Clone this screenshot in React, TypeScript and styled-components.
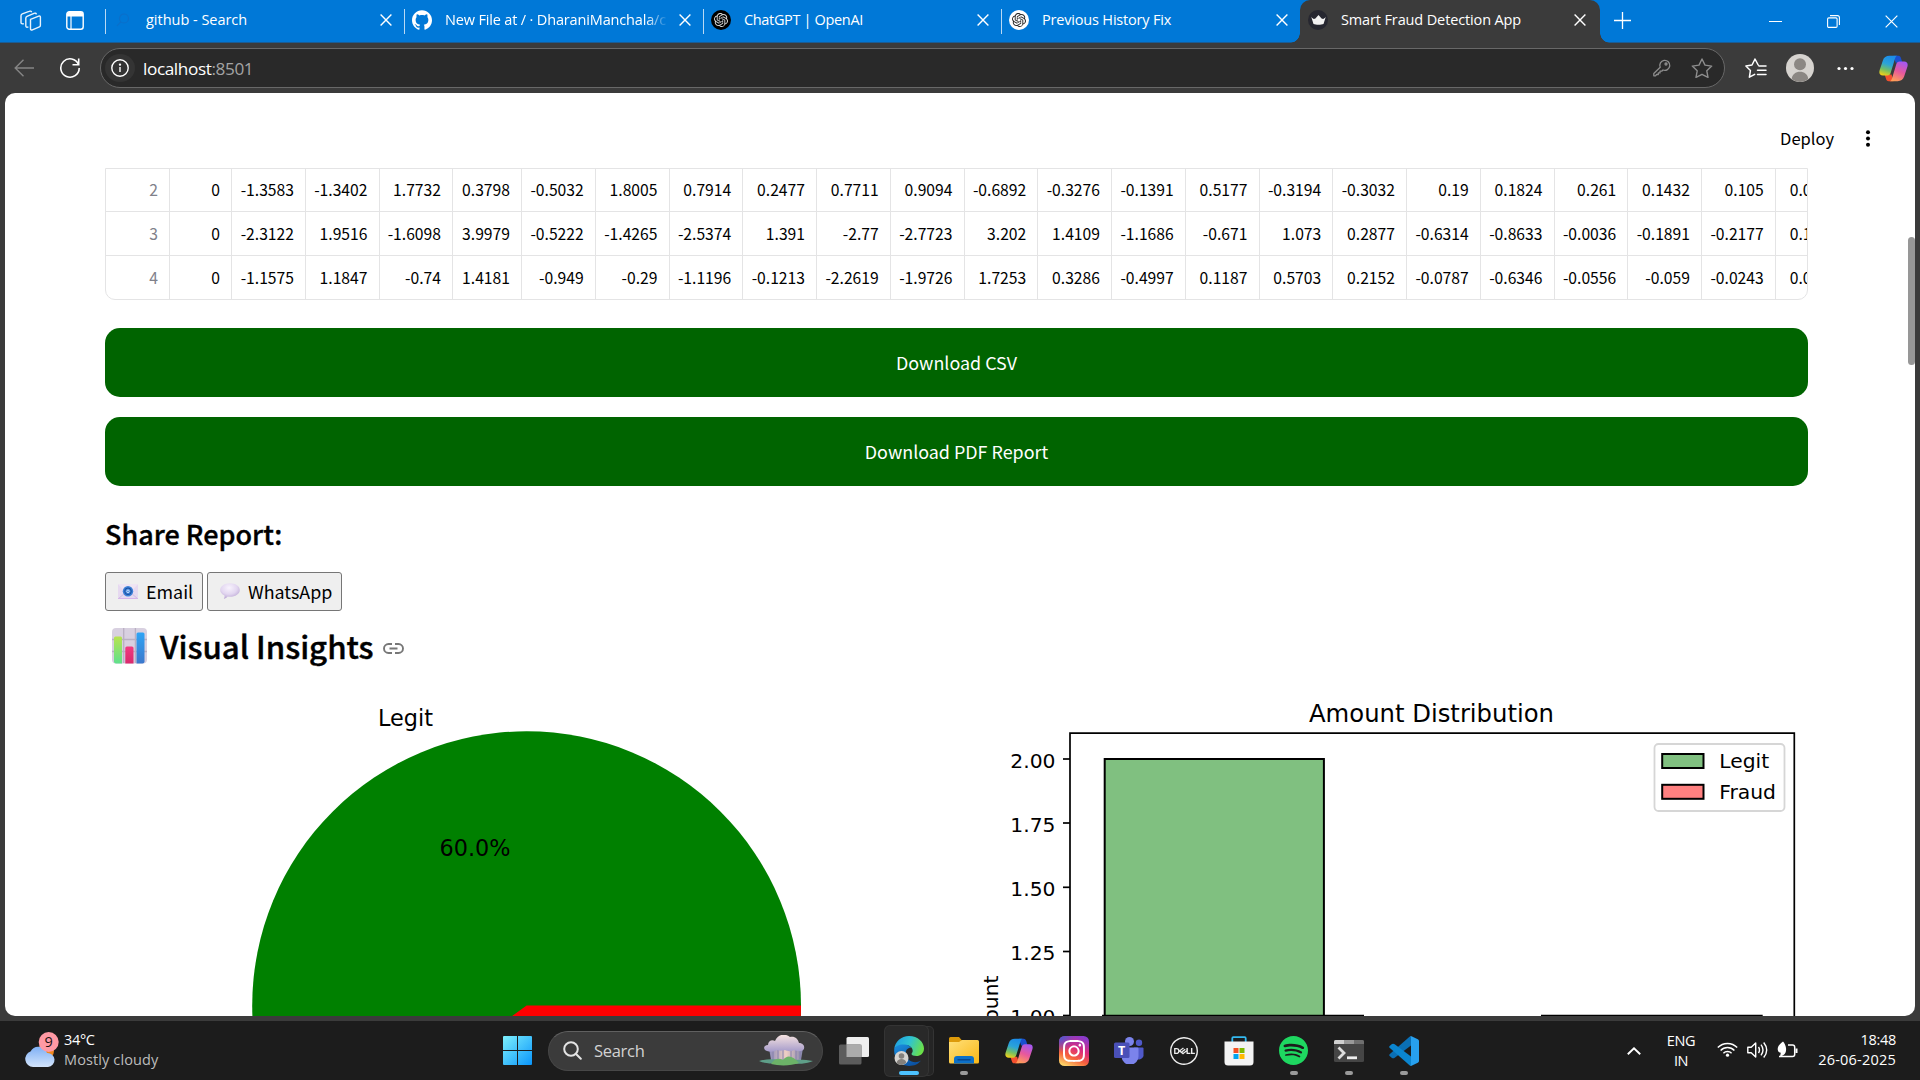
import React from "react";
import styled, { createGlobalStyle } from "styled-components";
import { SiDell, SiGithub, SiOpenai, SiSpotify } from "react-icons/si";
import { FaInstagram } from "react-icons/fa";

const segoe = `"Open Sans", "Noto Sans", sans-serif`;
const source = `"Noto Sans CJK JP", "Noto Sans CJK SC", sans-serif`;

const GlobalStyle = createGlobalStyle`
  * { box-sizing: border-box; }
  html, body { margin: 0; padding: 0; background: #3b3b3b; overflow: hidden; }
  button { font: inherit; color: inherit; padding: 0; margin: 0; border: 0; background: none; }
  svg { display: block; flex: none; }
`;

const Screen = styled.div`
  width: 1920px;
  height: 1080px;
  display: flex;
  flex-direction: column;
  background: #3b3b3b;
  overflow: hidden;
  font-family: ${segoe};
`;

/* ---------- Tab strip ---------- */

const TabStrip = styled.header`
  height: 43px;
  flex: none;
  display: flex;
  background: #0078d7;
  box-shadow: inset 0 -1px 0 #1a5c94;
  color: #fff;
`;

const StripTools = styled.div`
  width: 105px;
  display: flex;
  align-items: center;
  padding: 0 0 3px 20px;
  gap: 24px;
`;

const TabBox = styled.div<{ $active?: boolean; $w: number }>`
  width: ${(p) => p.$w}px;
  flex: none;
  height: 43px;
  display: flex;
  align-items: center;
  padding: 0 ${(p) => (p.$active ? 14 : 12.5)}px 3px 8px;
  background: ${(p) => (p.$active ? "#3b3b3b" : "transparent")};
  border-radius: ${(p) => (p.$active ? "10px 10px 0 0" : "0")};
  position: relative;
  ${(p) =>
    p.$active
      ? `
    &::before, &::after {
      content: "";
      position: absolute;
      bottom: 0;
      width: 10px;
      height: 10px;
    }
    &::before { left: -10px; background: radial-gradient(circle at 0 0, transparent 9.5px, #3b3b3b 10px); }
    &::after { right: -10px; background: radial-gradient(circle at 100% 0, transparent 9.5px, #3b3b3b 10px); }
  `
      : `
    &::before {
      content: "";
      position: absolute;
      left: 0;
      top: 9px;
      width: 1px;
      height: 25px;
      background: #b9d9f4;
    }
  `}
`;

const Favicon = styled.span<{ $bg?: string; $fg?: string }>`
  width: 20px;
  height: 20px;
  border-radius: 50%;
  display: flex;
  align-items: center;
  justify-content: center;
  background: ${(p) => p.$bg || "transparent"};
  color: ${(p) => p.$fg || "#fff"};
  flex: none;
`;

const TabTitle = styled.span<{ $fade?: boolean; $track: number }>`
  flex: 1;
  margin: 0 ${(p) => (p.$fade ? 11 : 12)}px 0 13px;
  font-size: 14.5px;
  line-height: 20px;
  letter-spacing: ${(p) => p.$track}px;
  white-space: nowrap;
  overflow: hidden;
  ${(p) => p.$fade && "mask-image: linear-gradient(90deg, #000 90%, transparent 100%);"}
`;

const WindowTools = styled.div`
  flex: 1;
  display: flex;
  align-items: center;
  padding: 0 22px 0 14px;
  gap: 45px;
  svg:first-child { margin-right: auto; margin-bottom: 3px; }
`;

/* ---------- Toolbar ---------- */

const Toolbar = styled.nav`
  height: 50px;
  flex: none;
  display: flex;
  align-items: center;
  padding: 0 12px 0 14px;
`;

const BackSlot = styled.span`margin-right: 25px;`;

const AddressBar = styled.div`
  width: 1625px;
  height: 40px;
  margin-left: 19px;
  border: 1px solid #686868;
  border-radius: 20px;
  background: #292929;
  display: flex;
  align-items: center;
  padding: 0 11px 0 4px;
`;

const InfoDisc = styled.span`
  width: 30px;
  height: 28px;
  border-radius: 50%;
  background: #343434;
  display: flex;
  align-items: center;
  justify-content: center;
`;

const Url = styled.span`
  flex: 1;
  margin-left: 8px;
  color: #fff;
  font-size: 17.2px;
  letter-spacing: -0.4px;
  em { font-style: normal; color: #a3a3a3; }
`;

const BarIcons = styled.span`
  display: flex;
  gap: 20px;
`;

const ToolIcons = styled.div`
  display: grid;
  grid-template-columns: 41px 51px 42px 29px;
  align-items: center;
  margin-left: 20px;
`;

/* ---------- Page ---------- */

const Page = styled.main`
  width: 1910px;
  height: 923px;
  flex: none;
  margin-left: 5px;
  border-radius: 10px;
  background: #fff;
  overflow: hidden;
  position: relative;
  padding: 0 107px 0 100px;
  font-family: ${source};
  color: #000;
`;

const ScrollThumb = styled.div`
  position: absolute;
  right: 0;
  top: 144px;
  width: 7px;
  height: 128px;
  border-radius: 4px;
  background: #979797;
`;

const AppHeader = styled.div`
  height: 75px;
  margin-right: -65px;
  display: flex;
  align-items: center;
  justify-content: flex-end;
  gap: 30px;
  padding: 16px 1px 0 0;
  font-size: 16.5px;
  line-height: 30px;
  span { margin-top: -1px; }
`;

const Table = styled.div`
  height: 132px;
  border: 1px solid #e4e4e5;
  border-radius: 0 0 10px 10px;
  overflow: hidden;
`;

const Row = styled.div`
  height: 44px;
  line-height: 43px;
  display: grid;
  grid-template-columns: 64px 62px 74px 73.5px 73.5px 69px repeat(18, 73.75px);
  &:first-child { height: 42px; line-height: 41px; }
  & + & { border-top: 1px solid #e4e4e5; }
`;

const Cell = styled.div<{ $index?: boolean; $cut?: boolean }>`
  border-right: 1px solid #e4e4e5;
  padding: 0 ${(p) => (p.$cut ? 0 : 11)}px 0 ${(p) => (p.$cut ? 14 : 0)}px;
  text-align: ${(p) => (p.$cut ? "left" : "right")};
  font-size: 15.7px;
  white-space: nowrap;
  color: ${(p) => (p.$index ? "#80818a" : "#000")};
`;

const DownloadList = styled.div`
  margin-top: 28px;
  display: flex;
  flex-direction: column;
  gap: 20px;
`;

const DownloadButton = styled.button`
  height: 69px;
  border-radius: 15px;
  background: #006400;
  color: #fff;
  font-size: 17.9px;
  line-height: 26px;
  padding-bottom: 1px;
`;

const ShareHeading = styled.h4`
  margin: 31px 0 0;
  height: 35px;
  font-size: 27px;
  line-height: 34px;
  font-weight: 500;
  -webkit-text-stroke: 0.35px #000;
`;

const ShareRow = styled.div`
  display: flex;
  gap: 4px;
  margin-top: 20px;
`;

const ShareButton = styled.button<{ $w: number }>`
  width: ${(p) => p.$w}px;
  height: 39px;
  border: 1px solid #767676;
  border-radius: 3px;
  background: #efefef;
  display: flex;
  align-items: center;
  gap: 8px;
  padding: 0 0 1px 12px;
  font-size: 17.9px;
  line-height: 26px;
`;

const InsightsHeading = styled.h3`
  margin: 10px 0 0 7px;
  height: 50px;
  display: flex;
  align-items: center;
  font-size: 31.2px;
  line-height: 50px;
  font-weight: 500;
  span { margin: 0 10px 0 13px; -webkit-text-stroke: 0.45px #000; }
  svg:last-child { margin-top: 4px; }
`;

const Charts = styled.div`
  display: flex;
  justify-content: space-between;
  margin-top: 19px;
  text { font-family: "DejaVu Sans", sans-serif; fill: #000; }
`;

/* ---------- Taskbar ---------- */

const Taskbar = styled.footer`
  height: 59px;
  margin-top: 5px;
  flex: none;
  background: #1c1c1c;
  display: flex;
  align-items: center;
  color: #fff;
`;

const Weather = styled.div`
  width: 503px;
  display: flex;
  align-items: center;
  padding-left: 24px;
  padding-bottom: 2px;
  gap: 5px;
`;

const Lines = styled.div<{ $align?: string; $track?: number }>`
  font-size: 14.5px;
  line-height: 20px;
  letter-spacing: ${(p) => p.$track ?? -0.2}px;
  text-align: ${(p) => p.$align || "left"};
  white-space: nowrap;
`;

const Condition = styled.span`
  color: #bdbdbd;
  letter-spacing: 0.12px;
`;

const DateText = styled.span`letter-spacing: 0.22px;`;

const SearchBox = styled.div`
  width: 275px;
  height: 40px;
  margin: 0 3px 0 16px;
  border-radius: 20px;
  border: 1px solid #474747;
  border-top-color: #606060;
  background: #3b3b3b;
  display: flex;
  align-items: center;
  padding: 0 9px 0 14px;
  color: #d2d2d2;
  font-size: 16.5px;
  letter-spacing: -0.3px;
  span { flex: 1; margin-left: 12px; }
`;

const AppSlot = styled.div<{ $on?: boolean; $run?: boolean }>`
  width: 47px;
  height: 50px;
  margin: 0 4px;
  border-radius: 5px;
  display: flex;
  flex-direction: column;
  align-items: center;
  justify-content: center;
  position: relative;
  ${(p) => p.$on && "width: 43px; margin: 0 8px 0 4px; padding-left: 4px; background: #292929; box-shadow: 0 0 0 1px #343434, 6px 0 0 -1px #252525, 6px 0 0 0 #343434;"}
  &::after {
    content: "";
    position: absolute;
    bottom: 1px;
    width: ${(p) => (p.$on ? 20 : 8)}px;
    height: 4px;
    border-radius: 2px;
    background: ${(p) => (p.$on ? "#4cc2ff" : p.$run ? "#9a9a9a" : "transparent")};
  }
`;

const Tray = styled.div`
  margin-left: auto;
  padding-right: 24px;
  display: flex;
  align-items: center;
`;

const Language = styled.div`margin: 0 22px 0 26px;`;

const Clock = styled.div`padding-bottom: 2px;`;

const TrayIcons = styled.div`
  display: flex;
  gap: 9px;
  margin-right: 20px;
  padding-bottom: 1px;
`;

/* ---------- Icons ---------- */

const CloseIcon = ({ size = 12, w = 1.4 }: { size?: number; w?: number }) => (
  <svg width={size} height={size} viewBox="0 0 12 12" stroke="#fff" strokeWidth={w} fill="none">
    <path d="M.6.6l10.8 10.8M11.4.6L.6 11.4" />
  </svg>
);

const WorkspacesIcon = () => (
  <svg width="22" height="21" viewBox="0 0 22 21" fill="none" stroke="#e8f3fc" strokeWidth="1.4" strokeLinejoin="round">
    <path d="M10.5 9.3l8.2-3.2c1-.3 1.7.1 1.7 1v8.2c0 .8-.3 1.3-1 1.6l-7 3c-1 .4-1.9 0-1.9-1z" />
    <path d="M8.4 16.8c-1.6.8-2.6.3-2.6-1V8.2c0-1 .4-1.5 1.2-1.9l7-3c1.2-.5 2.200 0 2.400 1" />
    <path d="M3.900 13.600C2.300 14.200 1 13.600 1 12.400V5.800c0-1 .5-1.600 1.300-1.900l6.800-2.600c1.200-.5 2.200-.1 2.500.9" />
  </svg>
);

const VerticalTabsIcon = () => (
  <svg width="18" height="19" viewBox="0 0 18 19" fill="none">
    <rect x=".8" y=".8" width="16.400" height="17.400" rx="2.500" stroke="#fff" strokeWidth="1.400" />
    <path d="M1 5.500V3a2 2 0 012-2h12a2 2 0 012 2v2.500z" fill="#fff" />
    <path d="M5 5v13" stroke="#fff" strokeWidth="1.200" />
  </svg>
);

const FaintSearch = () => (
  <svg width="14" height="14" viewBox="0 0 14 14" fill="none" stroke="#0a6fca" strokeWidth="1.200">
    <circle cx="8" cy="5.500" r="4.500" />
    <path d="M4.800 8.800L1 12.800" />
  </svg>
);

const Crown = () => (
  <svg width="15" height="10" viewBox="0 0 15 10" fill="#f2f2f2">
    <path d="M.2 1.800c1.500 2 2.600 2.600 4.200 1.600L7.500 0l3.100 3.400c1.600 1 2.700.4 4.200-1.600L12.500 9c-2.500.9-7.500.9-10 0z" />
  </svg>
);

const Copilot = ({ id, size }: { id: string; size: number }) => (
  <svg width={size} height={size} viewBox="0 0 24 24">
    <defs>
      <linearGradient id={id + "a"} x1="0.5" y1="0" x2="0.200" y2="1">
        <stop offset="0" stopColor="#1c8de8" />
        <stop offset=".4" stopColor="#2ba4d8" />
        <stop offset=".7" stopColor="#73bf63" />
        <stop offset="1" stopColor="#f5d116" />
      </linearGradient>
      <linearGradient id={id + "b"} x1="0.700" y1="0" x2="0.300" y2="1">
        <stop offset="0" stopColor="#a658f0" />
        <stop offset=".5" stopColor="#e8589c" />
        <stop offset="1" stopColor="#ff9f58" />
      </linearGradient>
    </defs>
    <path d="M12 1.500h4c1.300 0 1.900.9 2.200 2l1.200 3.700h-5.600z" fill="#1a4fcf" />
    <path d="M12 22.500H8c-1.300 0-1.900-.9-2.200-2l-1.200-3.500h5.800z" fill="#f4502e" />
    <path d="M8.500 1.500h6.800c-1.300.2-1.700 1.200-2.100 2.500L9.700 15.500c-.4 1.400-1.300 2.200-2.700 2.200H3.200C.7 17.700-.2 16 .5 13.500L3.200 5.300C4 2.800 6 1.500 8.500 1.500z" fill={`url(#${id}a)`} />
    <path d="M15.500 22.500H8.700c1.300-.2 1.700-1.200 2.100-2.500l3.500-11.500c.4-1.400 1.300-2.200 2.700-2.200h3.800c2.500 0 3.400 1.700 2.700 4.200l-2.700 8.200c-.8 2.500-2.800 3.800-5.300 3.800z" fill={`url(#${id}b)`} />
  </svg>
);

const BarEmoji = () => (
  <svg width="35" height="36" viewBox="0 0 35 36">
    <defs>
      <linearGradient id="g1" x1="0" y1="0" x2="0" y2="1"><stop offset="0" stopColor="#b8e34f" /><stop offset="1" stopColor="#5fe08d" /></linearGradient>
      <linearGradient id="g2" x1="0" y1="0" x2="0" y2="1"><stop offset="0" stopColor="#f23a80" /><stop offset="1" stopColor="#d92a6c" /></linearGradient>
      <linearGradient id="g3" x1="0" y1="0" x2="0" y2="1"><stop offset="0" stopColor="#2ea4f5" /><stop offset="1" stopColor="#3c78cc" /></linearGradient>
    </defs>
    <rect x="0" y="0" width="35" height="35.500" rx="4" fill="#d8d0e0" />
    <path d="M11.700 0v35M23.400 0v35M0 11.500h35M0 23.500h35" stroke="#b9b0c2" strokeWidth="1.300" />
    <path d="M2 10a1.500 1.500 0 011.500-1.500h5A1.500 1.500 0 0110 10v25.500H4q-2 0-2-2z" fill="url(#g1)" />
    <path d="M13.300 20a1.500 1.500 0 011.500-1.500h5.200a1.500 1.500 0 011.500 1.500v15.500h-8.200z" fill="url(#g2)" />
    <path d="M24.500 6A1.500 1.500 0 0126 4.500h5A1.500 1.500 0 0132.500 6v27.500q0 2-2 2h-6z" fill="url(#g3)" />
  </svg>
);

const EmailEmoji = () => (
  <svg width="20" height="15" viewBox="0 0 20 15">
    <rect width="20" height="15" rx="1" fill="#e6d9f0" />
    <path d="M0 0h20l-7 8H7z" fill="#efe5f3" />
    <path d="M0 15l7-6M20 15l-7-6" stroke="#cdbce0" />
    <path d="M0 14h20v1H0z" fill="#d6b4ea" />
    <circle cx="10" cy="7.300" r="5.200" fill="#3c80d8" />
    <circle cx="10" cy="7.300" r="3.300" fill="none" stroke="#1c4f9c" strokeWidth="1" />
    <circle cx="10" cy="7.300" r="1.300" fill="none" stroke="#d6e6fa" strokeWidth=".9" />
  </svg>
);

const SpeechEmoji = () => (
  <svg width="20" height="16" viewBox="0 0 20 16">
    <defs>
      <radialGradient id="sp" cx=".45" cy=".3" r=".75"><stop offset="0" stopColor="#f8f3fd" /><stop offset=".55" stopColor="#e2d6f0" /><stop offset="1" stopColor="#b5a0d0" /></radialGradient>
    </defs>
    <path d="M10 .2c5.500 0 9.800 2.900 9.800 6.800S15.500 13.800 10 13.800c-.8 0-1.600-.1-2.300-.2C6.500 15 5.200 15.800 3.800 15.700c.7-.8.9-2 .7-3.200C1.800 11.200.2 9.300.2 7 .2 3.100 4.500.2 10 .2z" fill="url(#sp)" />
  </svg>
);

const PieChart = () => (
  <svg width="835" height="330" viewBox="105 690 835 330">
    <text x="378" y="725.500" fontSize="22.200" textLength="55" lengthAdjust="spacingAndGlyphs">Legit</text>
    <circle cx="526.600" cy="1005.700" r="274.400" fill="#008000" />
    <path d="M526.600 1005.500H801A274.400 274.400 0 01304.600 1167z" fill="#f00" />
    <text x="475" y="856" fontSize="22.200" textAnchor="middle" textLength="71" lengthAdjust="spacingAndGlyphs">60.0%</text>
  </svg>
);

const ticks = [
  { label: "2.00", y: 759 },
  { label: "1.75", y: 823 },
  { label: "1.50", y: 887.300 },
  { label: "1.25", y: 951.500 },
  { label: "1.00", y: 1015.500 },
];

const BarChart = () => (
  <svg width="838" height="330" viewBox="970 690 838 330">
    <text x="1309" y="721.500" fontSize="24.300" textLength="245" lengthAdjust="spacingAndGlyphs">Amount Distribution</text>
    <rect x="1104.700" y="759" width="219.200" height="300" fill="#80c080" stroke="#000" strokeWidth="2" />
    <path d="M1070 1060V733.200H1794.300V1060" fill="none" stroke="#000" strokeWidth="1.700" />
    <path d="M1102 1015.500H1364M1541 1015.500H1762.700" stroke="#000" strokeWidth="1.600" />
    {ticks.map((t) => (
      <g key={t.label}>
        <path d={`M1063 ${t.y}h7`} stroke="#000" strokeWidth="1.700" />
        <text x="1055.500" y={t.y + 8.800} fontSize="20.300" textAnchor="end">{t.label}</text>
      </g>
    ))}
    <text transform="translate(998.300 975.500) rotate(-90)" fontSize="20.300" textAnchor="end">Count</text>
    <rect x="1654.500" y="744" width="130" height="67" rx="4" fill="#fff" stroke="#d6d6d6" strokeWidth="1.800" />
    <rect x="1662.200" y="754" width="41.300" height="14" fill="#80c080" stroke="#000" strokeWidth="2" />
    <rect x="1662.200" y="784.800" width="41.300" height="14" fill="#ff8080" stroke="#000" strokeWidth="2" />
    <text x="1719.300" y="768.300" fontSize="20.300">Legit</text>
    <text x="1719.300" y="799" fontSize="20.300">Fraud</text>
  </svg>
);

const WeatherIcon = () => (
  <svg width="35" height="38" viewBox="24 1027 35 38">
    <defs>
      <linearGradient id="cl" x1="0" y1="0" x2="0" y2="1"><stop offset="0" stopColor="#7fb0f5" /><stop offset="1" stopColor="#d3e4fb" /></linearGradient>
    </defs>
    <circle cx="46" cy="1047" r="8" fill="#f0871c" />
    <path d="M33 1063a8 8 0 01-2.500-15.500 9 9 0 0116.500 1.500 7 7 0 011 14z" fill="url(#cl)" />
    <circle cx="48.700" cy="1038" r="10" fill="#ff99a4" />
    <text x="48.700" y="1043.200" fontSize="14.500" fontFamily="Open Sans, sans-serif" textAnchor="middle" fill="#201010">9</text>
  </svg>
);

const SearchArt = () => (
  <svg width="54" height="32" viewBox="0 0 54 32">
    <defs>
      <linearGradient id="mt" x1="0" y1="0" x2="0" y2="1"><stop offset="0" stopColor="#f6e3e0" /><stop offset="1" stopColor="#a69ccb" /></linearGradient>
      <linearGradient id="rn" x1="0" y1="0" x2="1" y2="0"><stop offset="0" stopColor="#8d8bb8" /><stop offset=".5" stopColor="#efcfc4" /><stop offset="1" stopColor="#8384ad" /></linearGradient>
    </defs>
    <path d="M10 13h34l-2 12H12z" fill="url(#rn)" />
    <path d="M14 13v12M19 14v12M24 13v12M32 13v12M37 14v12M41 13v11" stroke="#7f7cab" strokeWidth=".9" />
    <path d="M8 16c-4-1-4-6 1-6 0-4 4-6 7-4 3-7 10-8 15-4 5-1 8 2 9 6 6 0 7 7 2 8-3 1-6-1-7-1-3 2-7 1-9 0-3 1-6 1-8 0-3 2-7 2-10 1z" fill="url(#mt)" />
    <path d="M0 26c10-3 18-1 27-1s18-1 27 1c-7 3-14 3-27 3S7 29 0 26z" fill="#5f9f89" />
    <path d="M12 29c4-6 8-6 12-4 4-5 9-5 16 3-8 3-20 3-28 1z" fill="#6cb368" />
  </svg>
);

const EdgeIcon = () => (
  <svg width="30" height="30" viewBox="0 0 30 30">
    <defs>
      <linearGradient id="e1" x1="0" y1=".2" x2="1" y2=".5"><stop offset="0" stopColor="#1e9de4" /><stop offset=".5" stopColor="#2fc3d2" /><stop offset="1" stopColor="#6be048" /></linearGradient>
      <linearGradient id="e2" x1="0" y1="0" x2=".6" y2="1"><stop offset="0" stopColor="#1b8fe0" /><stop offset="1" stopColor="#0b53a5" /></linearGradient>
    </defs>
    <path d="M.2 13.500C.8 5.500 7.300 0 15 0c9 0 15 6.300 15 12.500 0 5-3.800 7.500-7.500 7.500-3 0-5-.9-5-2 0-.6 1.200-1.400 1.200-3.200 0-2.600-2.400-5.800-7.200-5.800C6 9 1.500 10.500.2 13.500z" fill="url(#e1)" />
    <path d="M.2 13.500C1.500 9.500 6 8 10.500 8.500c3 .2 5.500 1.500 7 3.500-3-.8-5.800 1.500-5.800 5.500 0 5 4.600 8.700 9.600 8.700 2 0 4-.6 5.700-1.600C24 28.500 20 30 15 30 6 30-.5 22.500.2 13.500z" fill="url(#e2)" />
    <circle cx="7.500" cy="22" r="7" fill="#d6d4d1" />
    <circle cx="7.500" cy="20" r="2.800" fill="#84807c" />
    <path d="M2.800 26.800c.3-5 9.100-5 9.400 0-2.800 2.900-6.800 2.800-9.400 0z" fill="#84807c" />
  </svg>
);

/* ---------- Data ---------- */

const rows = [
  "2 0 -1.3583 -1.3402 1.7732 0.3798 -0.5032 1.8005 0.7914 0.2477 0.7711 0.9094 -0.6892 -0.3276 -0.1391 0.5177 -0.3194 -0.3032 0.19 0.1824 0.261 0.1432 0.105 0.0",
  "3 0 -2.3122 1.9516 -1.6098 3.9979 -0.5222 -1.4265 -2.5374 1.391 -2.77 -2.7723 3.202 1.4109 -1.1686 -0.671 1.073 0.2877 -0.6314 -0.8633 -0.0036 -0.1891 -0.2177 0.1",
  "4 0 -1.1575 1.1847 -0.74 1.4181 -0.949 -0.29 -1.1196 -0.1213 -2.2619 -1.9726 1.7253 0.3286 -0.4997 0.1187 0.5703 0.2152 -0.0787 -0.6346 -0.0556 -0.059 -0.0243 0.0",
].map((r) => r.split(" "));

const tabs = [
  { title: "github - Search", w: 299, track: -0.02, icon: <Favicon><FaintSearch /></Favicon> },
  { title: "New File at / · DharaniManchala/c", w: 299, track: -0.16, fade: true, icon: <Favicon><SiGithub size={20} /></Favicon> },
  { title: "ChatGPT | OpenAI", w: 298, track: -0.34, icon: <Favicon $bg="#000" $fg="#ddd"><SiOpenai size={14} /></Favicon> },
  { title: "Previous History Fix", w: 299, track: -0.18, icon: <Favicon $bg="#fff" $fg="#222"><SiOpenai size={14} /></Favicon> },
  { title: "Smart Fraud Detection App", w: 300, track: -0.13, active: true, icon: <Favicon $bg="#262730"><Crown /></Favicon> },
];

export default function App() {
  return (
    <Screen>
      <GlobalStyle />
      <TabStrip>
        <StripTools>
          <WorkspacesIcon />
          <VerticalTabsIcon />
        </StripTools>
        {tabs.map((t) => (
          <TabBox key={t.title} $w={t.w} $active={t.active}>
            {t.icon}
            <TabTitle $fade={t.fade} $track={t.track}>{t.title}</TabTitle>
            <CloseIcon />
          </TabBox>
        ))}
        <WindowTools>
          <svg width="17" height="17" viewBox="0 0 17 17" stroke="#fff" strokeWidth="1.300"><path d="M8.500 0v17M0 8.500h17" /></svg>
          <svg width="13" height="13" viewBox="0 0 13 13" stroke="#fff"><path d="M0 6.500h13" /></svg>
          <svg width="13" height="13" viewBox="0 0 13 13" stroke="#fff" fill="none" strokeWidth="1.100"><rect x=".6" y="2.900" width="9.500" height="9.500" rx="1.200" /><path d="M3 .6h7.400q2 0 2 2V10" /></svg>
          <CloseIcon size={13} w={1.100} />
        </WindowTools>
      </TabStrip>

      <Toolbar>
        <BackSlot>
          <svg width="20" height="18" viewBox="0 0 20 18" stroke="#858585" strokeWidth="1.400" fill="none"><path d="M20 9H1.200M9.500.7L1.200 9l8.300 8.300" /></svg>
        </BackSlot>
        <svg width="22" height="22" viewBox="0 0 22 22" stroke="#fff" strokeWidth="1.600" fill="none"><path d="M19.500 7.500A9.200 9.200 0 1020.200 11M19.700 1.500v6.200h-6.200" /></svg>
        <AddressBar>
          <InfoDisc>
            <svg width="18" height="18" viewBox="0 0 18 18" stroke="#fff" strokeWidth="1.400" fill="none"><circle cx="9" cy="9" r="8.200" /><path d="M9 8v5" /><circle cx="9" cy="5.600" r=".5" fill="#fff" /></svg>
          </InfoDisc>
          <Url>localhost<em>:8501</em></Url>
          <BarIcons>
            <svg width="18" height="20" viewBox="0 0 18 20" stroke="#8d8d8d" strokeWidth="1.300" fill="none" strokeLinejoin="round"><path d="M7.200 9.300A5 5 0 1110 12l-1.300 1.200H7v1.700H5.300v1.600H3.600L2.500 17.800H.8V15.500z" /><circle cx="13" cy="6" r="1" /></svg>
            <svg width="22" height="20" viewBox="0 0 22 20" stroke="#8d8d8d" strokeWidth="1.400" fill="none" strokeLinejoin="round"><path d="M11 1l3 6.100 6.700 1-4.900 4.700L17 19.400l-6-3.100-6 3.100 1.200-6.600L1.300 8.100l6.700-1z" /></svg>
          </BarIcons>
        </AddressBar>
        <ToolIcons>
          <svg width="22" height="20" viewBox="0 0 22 20" stroke="#fff" strokeWidth="1.500" fill="none" strokeLinejoin="round" strokeLinecap="round"><path d="M13.200 7L10 1 7 7 .9 8l4.500 4.600-1 6.600 5.300-2.900M14 8h7M12.500 12.300H21M12.500 16.500H21" /></svg>
          <svg width="28" height="28" viewBox="0 0 28 28"><circle cx="14" cy="14" r="14" fill="#d6d3cf" /><circle cx="14" cy="10.300" r="6" fill="#8b8783" /><path d="M5.800 25.300c0-10 16.400-10 16.400 0a14 14 0 01-16.400 0z" fill="#8b8783" /></svg>
          <svg width="17" height="5" viewBox="0 0 17 5" fill="#fff"><circle cx="2" cy="2.500" r="1.600" /><circle cx="8.500" cy="2.500" r="1.600" /><circle cx="15" cy="2.500" r="1.600" /></svg>
          <Copilot id="cpa" size={29} />
        </ToolIcons>
      </Toolbar>

      <Page>
        <AppHeader>
          <span>Deploy</span>
          <svg width="8" height="17" viewBox="0 0 8 17"><circle cx="4" cy="2.200" r="2" /><circle cx="4" cy="8.500" r="2" /><circle cx="4" cy="14.800" r="2" /></svg>
        </AppHeader>
        <Table>
          {rows.map((r) => (
            <Row key={r[0]}>
              {r.map((v, i) => (
                <Cell key={i} $index={i === 0} $cut={i === r.length - 1}>{v}</Cell>
              ))}
            </Row>
          ))}
        </Table>
        <DownloadList>
          <DownloadButton>Download CSV</DownloadButton>
          <DownloadButton>Download PDF Report</DownloadButton>
        </DownloadList>
        <ShareHeading>Share Report:</ShareHeading>
        <ShareRow>
          <ShareButton $w={98}><EmailEmoji />Email</ShareButton>
          <ShareButton $w={135}><SpeechEmoji />WhatsApp</ShareButton>
        </ShareRow>
        <InsightsHeading>
          <BarEmoji />
          <span>Visual Insights</span>
          <svg width="21" height="11" viewBox="0 0 21 11" fill="none" stroke="#777" strokeWidth="1.900"><path d="M9 1H5.500a4.500 4.500 0 000 9H9M12 1h3.500a4.500 4.500 0 010 9H12M6.500 5.500h8" /></svg>
        </InsightsHeading>
        <Charts>
          <PieChart />
          <BarChart />
        </Charts>
        <ScrollThumb />
      </Page>

      <Taskbar>
        <Weather>
          <WeatherIcon />
          <Lines $track={-0.35}>34°C<br /><Condition>Mostly cloudy</Condition></Lines>
        </Weather>
        <svg width="29" height="29" viewBox="0 0 29 29">
          <defs><linearGradient id="win" x1="0" y1="0" x2="1" y2="1"><stop offset="0" stopColor="#7df0fc" /><stop offset="1" stopColor="#0a95fb" /></linearGradient></defs>
          <path d="M1 0h13v14H0V1q0-1 1-1zM15 0h13q1 0 1 1v13H15zM0 15h14v14H1q-1 0-1-1zM15 15h14v13q0 1-1 1H15z" fill="url(#win)" />
        </svg>
        <SearchBox>
          <svg width="19" height="19" viewBox="0 0 19 19" fill="none" stroke="#e4e4e4" strokeWidth="2"><circle cx="8" cy="8" r="6.800" /><path d="M12.800 12.800l5 5" strokeLinecap="round" /></svg>
          <span>Search</span>
          <SearchArt />
        </SearchBox>
        <AppSlot>
          <svg width="30" height="28" viewBox="0 0 30 28"><rect x="7.500" y="0" width="22.500" height="20" rx="1.500" fill="#eee" /><rect x="0" y="7.500" width="22.500" height="20" rx="1.500" fill="#5c5c5c" /><path d="M7.500 7.500h15v12.500h-15z" fill="#ababab" /></svg>
        </AppSlot>
        <AppSlot $on><EdgeIcon /></AppSlot>
        <AppSlot $run>
          <svg width="30" height="27" viewBox="0 0 30 27">
            <defs><linearGradient id="fo" x1="0" y1="0" x2="1" y2="1"><stop offset="0" stopColor="#ffe07a" /><stop offset="1" stopColor="#f9b716" /></linearGradient></defs>
            <path d="M0 1.500Q0 0 1.500 0H10l3 3.500H28V10H0z" fill="#dd9a0a" />
            <path d="M0 5h10l3-2h15.500q1.500 0 1.500 1.500V25q0 1.500-1.500 1.500h-27Q0 26.500 0 25z" fill="url(#fo)" />
            <path d="M5 26.500V22q0-3 3-3h14q3 0 3 3v4.500z" fill="#0c70c8" /><path d="M8.500 22.800h13" stroke="#07458c" strokeWidth="1.400" />
          </svg>
        </AppSlot>
        <AppSlot><Copilot id="cpb" size={28} /></AppSlot>
        <AppSlot>
          <svg width="30" height="30" viewBox="0 0 30 30">
            <defs>
              <linearGradient id="ig" x1=".7" y1="0" x2=".25" y2="1"><stop offset="0" stopColor="#8a3bcb" /><stop offset=".4" stopColor="#dc2b7c" /><stop offset=".7" stopColor="#f6633c" /><stop offset="1" stopColor="#fdd267" /></linearGradient>
              <radialGradient id="ib" cx="0" cy="0" r=".55"><stop offset="0" stopColor="#3e5fd8" /><stop offset="1" stopColor="#3e5fd8" stopOpacity="0" /></radialGradient>
            </defs>
            <rect width="30" height="30" rx="5.500" fill="url(#ig)" /><rect width="30" height="30" rx="5.500" fill="url(#ib)" />
            <FaInstagram x={2.500} y={2.500} size={25} color="#fff" />
          </svg>
        </AppSlot>
        <AppSlot>
          <svg width="30" height="27" viewBox="0 0 30 27">
            <circle cx="25" cy="5.800" r="3.200" fill="#5059c9" /><path d="M20 10.500h8.500q1 0 1 1V19a5.500 5.500 0 01-9 2z" fill="#5059c9" />
            <circle cx="15.500" cy="4.500" r="4.500" fill="#7b83eb" /><path d="M6 10.500h17.500q1 0 1 1v7a8.500 8.500 0 01-17 1.500z" fill="#7b83eb" />
            <rect x="0" y="5.500" width="15.500" height="15.500" rx="1.500" fill="#4a50b8" />
            <text x="7.700" y="18" fontSize="12.500" fontWeight="700" fontFamily="Open Sans, sans-serif" fill="#fff" textAnchor="middle">T</text>
          </svg>
        </AppSlot>
        <AppSlot><SiDell size={28} color="#eeeeee" /></AppSlot>
        <AppSlot>
          <svg width="30" height="30" viewBox="0 0 30 30">
            <path d="M8.300 7V2.200q0-1 1-1h11.400q1 0 1 1V7" fill="none" stroke="#33b9f0" strokeWidth="1.800" />
            <path d="M.5 5.500h29V26q0 3.500-3.500 3.500H4Q.5 29.500.5 26z" fill="#f3f3f3" />
            <path d="M9.500 12h5v5h-5z" fill="#f25022" /><path d="M15.500 12h5v5h-5z" fill="#7fba00" /><path d="M9.500 18h5v5h-5z" fill="#00a4ef" /><path d="M15.500 18h5v5h-5z" fill="#ffb900" />
          </svg>
        </AppSlot>
        <AppSlot $run><SiSpotify size={29} color="#1ed760" /></AppSlot>
        <AppSlot $run>
          <svg width="30" height="22" viewBox="0 0 30 22"><rect width="30" height="22" rx="1.500" fill="#454545" /><path d="M0 4V1.500Q0 0 1.500 0H10v4z" fill="#d0d0d0" /><path d="M10 0h10v4H10z" fill="#999" /><path d="M20 0h8.500Q30 0 30 1.500V4H20z" fill="#6f6f6f" /><path d="M4.500 7.500l5.500 5.500-5.500 5.500" stroke="#ddd" strokeWidth="2.800" fill="none" /><path d="M13 17.800h10" stroke="#eee" strokeWidth="2.800" /></svg>
        </AppSlot>
        <AppSlot $run>
          <svg width="30" height="30" viewBox="0 0 30 30"><path d="M22 .5V9.500L5.700 21.800q-1.400 1-2.700.2L.6 19.900q-.8-.8 0-1.700L20.500.8z" fill="#0a6fb5" /><path d="M22 29.500V20.500L5.700 8.200Q4.300 7.200 3 8L.6 10.100q-.8.8 0 1.700L20.500 29.200z" fill="#0b85cf" /><path d="M20.300.6q1-.9 2.200-.4l6.300 3Q30 3.900 30 5v20q0 1.100-1.200 1.800l-6.300 3q-1.200.5-2.200-.4 1.700 1 1.700-1.400V2q0-2.400-1.700-1.400z" fill="#27a0ee" /></svg>
        </AppSlot>
        <Tray>
          <svg width="14" height="8" viewBox="0 0 14 8" fill="none" stroke="#fff" strokeWidth="1.900"><path d="M.8 7.300L7 1.300l6.200 6" /></svg>
          <Language><Lines $align="center" $track={-0.4}>ENG<br />IN</Lines></Language>
          <TrayIcons>
            <svg width="21" height="17" viewBox="0 0 21 17" fill="none" stroke="#fff" strokeWidth="1.500"><path d="M.8 6.500a13.700 13.700 0 0119.400 0M3.600 9.500a9.700 9.700 0 0113.800 0M6.400 12.300a5.800 5.800 0 018.200 0" /><circle cx="10.500" cy="14.200" r="1.600" fill="#fff" stroke="none" /></svg>
            <svg width="21" height="18" viewBox="0 0 21 18" fill="none" stroke="#fff" strokeWidth="1.400" strokeLinejoin="round"><path d="M.8 6.300h3.400L8.700 2v14l-4.500-4.300H.8z" /><path d="M11.500 6q2 3 0 6M14 3.700q4 5.300 0 10.600M16.700 1.500q6 7.500 0 15" /></svg>
            <svg width="21" height="18" viewBox="0 0 21 18" fill="none" stroke="#fff" strokeWidth="1.500"><path d="M11 4h4.500q2.200 0 2.200 2.200v7q0 2.300-2.200 2.300H2" /><path d="M19.500 7.500v4.500" strokeWidth="2" /><path d="M6 .5C2 3.500.3 6 .8 9c.3 1.800 1.500 2.700 3 2.800L3 15.500C8 14.500 9.500 11.500 9 7 8.800 4.500 7.500 2 6 .5z" fill="#fff" stroke="none" /></svg>
          </TrayIcons>
          <Clock><Lines $align="right" $track={-0.3}>18:48<br /><DateText>26-06-2025</DateText></Lines></Clock>
        </Tray>
      </Taskbar>
    </Screen>
  );
}
